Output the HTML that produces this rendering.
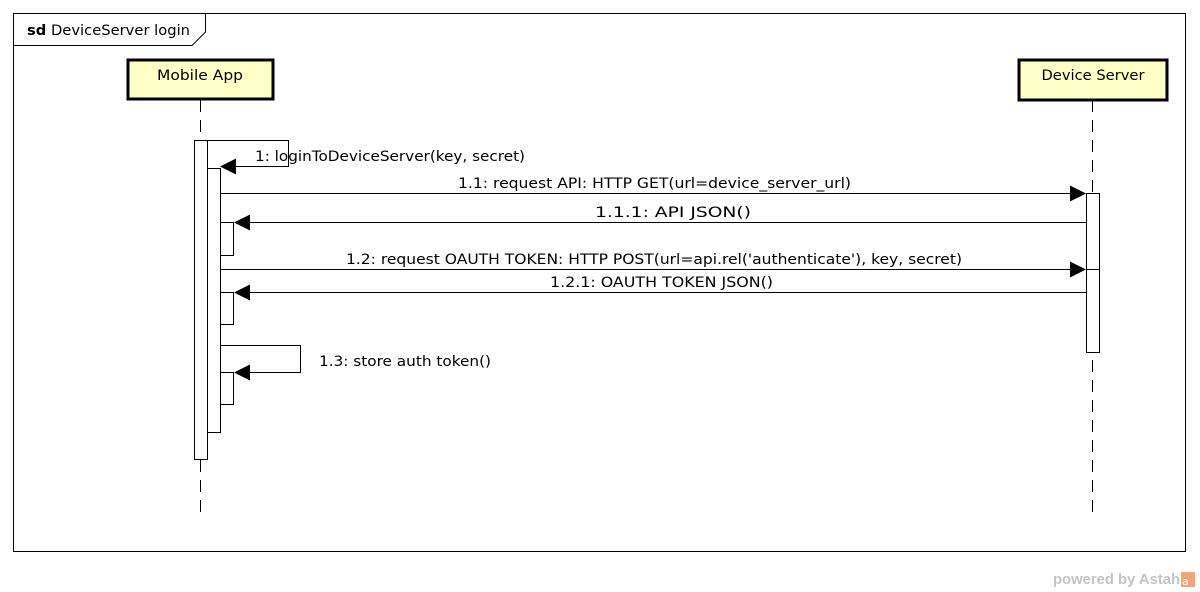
<!DOCTYPE html>
<html><head><meta charset="utf-8"><style>
html,body{margin:0;padding:0;background:#fff;width:1200px;height:592px;overflow:hidden}
svg text{font-family:"DejaVu Sans","Liberation Sans",sans-serif;font-size:14px;fill:#000}
</style></head><body>
<svg width="1200" height="592" viewBox="0 0 1200 592" xmlns="http://www.w3.org/2000/svg">
<rect x="13.5" y="13.5" width="1172" height="538" fill="#fff" stroke="#000" stroke-width="1"/>
<path d="M13.5 45.5 H192 L205.5 32 V13.5" fill="none" stroke="#000"/>
<text x="27" y="35" textLength="163" lengthAdjust="spacingAndGlyphs"><tspan font-weight="bold">sd</tspan> DeviceServer login</text>

<line x1="200.5" y1="100" x2="200.5" y2="512" stroke="#000" stroke-dasharray="12,8"/>
<line x1="1092.5" y1="100" x2="1092.5" y2="512" stroke="#000" stroke-dasharray="12,8"/>

<rect x="128" y="60" width="145" height="39" fill="#ffffc8" stroke="#000" stroke-width="3"/>
<text x="200" y="80" text-anchor="middle" textLength="86" lengthAdjust="spacingAndGlyphs">Mobile App</text>
<rect x="1019" y="60" width="148" height="40" fill="#ffffc8" stroke="#000" stroke-width="3"/>
<text x="1093" y="80" text-anchor="middle" textLength="103" lengthAdjust="spacingAndGlyphs">Device Server</text>

<rect x="194.5" y="140.5" width="13" height="319" fill="#fff" stroke="#000"/>
<rect x="207.5" y="168.5" width="13" height="264" fill="#fff" stroke="#000"/>
<rect x="220.5" y="222.5" width="13" height="33" fill="#fff" stroke="#000"/>
<rect x="220.5" y="292.5" width="13" height="32" fill="#fff" stroke="#000"/>
<rect x="220.5" y="372.5" width="13" height="32" fill="#fff" stroke="#000"/>
<rect x="1086.5" y="193.5" width="13" height="159" fill="#fff" stroke="#000"/>
<line x1="1086.5" y1="269.5" x2="1099.5" y2="269.5" stroke="#000"/>

<path d="M207.5 140.5 H288.5 V166.5 H234" fill="none" stroke="#000"/>
<polygon points="220,166.5 236,158.5 236,174.5" fill="#000"/>
<text x="255" y="161" textLength="270" lengthAdjust="spacingAndGlyphs">1: loginToDeviceServer(key, secret)</text>

<line x1="220.5" y1="193.5" x2="1072" y2="193.5" stroke="#000"/>
<polygon points="1086,193.5 1070,185.5 1070,201.5" fill="#000"/>
<text x="458" y="188" textLength="393" lengthAdjust="spacingAndGlyphs">1.1: request API: HTTP GET(url=device_server_url)</text>

<line x1="248" y1="222.5" x2="1086.5" y2="222.5" stroke="#000"/>
<polygon points="234,222.5 250,214.5 250,230.5" fill="#000"/>
<text x="595" y="217" textLength="156" lengthAdjust="spacingAndGlyphs">1.1.1: API JSON()</text>

<line x1="220.5" y1="269.5" x2="1072" y2="269.5" stroke="#000"/>
<polygon points="1086,269.5 1070,261.5 1070,277.5" fill="#000"/>
<text x="346" y="264" textLength="616" lengthAdjust="spacingAndGlyphs">1.2: request OAUTH TOKEN: HTTP POST(url=api.rel('authenticate'), key, secret)</text>

<line x1="248" y1="292.5" x2="1086.5" y2="292.5" stroke="#000"/>
<polygon points="234,292.5 250,284.5 250,300.5" fill="#000"/>
<text x="550" y="287" textLength="223" lengthAdjust="spacingAndGlyphs">1.2.1: OAUTH TOKEN JSON()</text>

<path d="M220.5 345.5 H300.5 V372.5 H248" fill="none" stroke="#000"/>
<polygon points="234,372.5 250,364.5 250,380.5" fill="#000"/>
<text x="319" y="366" textLength="172" lengthAdjust="spacingAndGlyphs">1.3: store auth token()</text>

<text x="1053" y="584" font-family="Liberation Sans,sans-serif" font-size="15" font-weight="bold" style="fill:#c4c4c4;font-family:'Liberation Sans',sans-serif;font-size:15px;font-weight:bold" textLength="127" lengthAdjust="spacingAndGlyphs">powered by Astah</text>
<rect x="1181" y="572" width="14" height="15" fill="#f2a47a"/>
<text x="1182" y="585" style="fill:#fff;font-size:11px">a</text>
</svg>
</body></html>
